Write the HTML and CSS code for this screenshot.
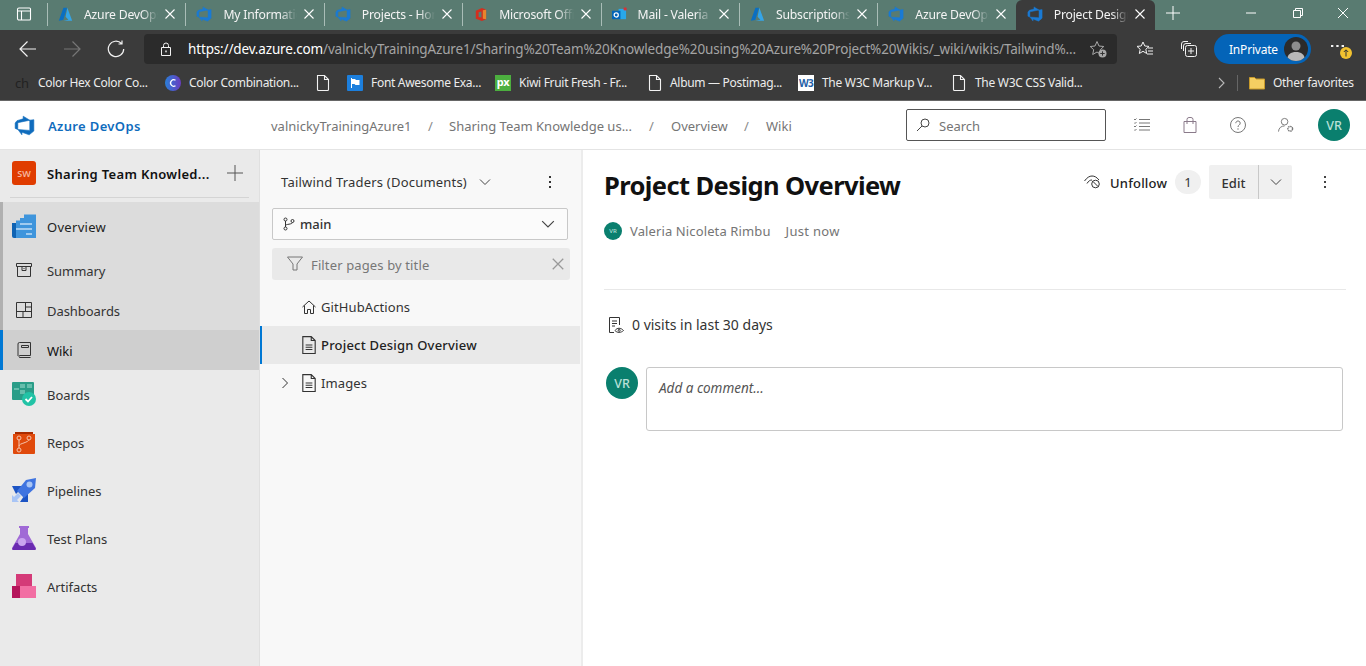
FILE: index.html
```html
<!DOCTYPE html>
<html lang="en">
<head>
<meta charset="utf-8">
<title>Project Design Overview</title>
<link rel="stylesheet" href="styles.css">
</head>
<body>
<svg class="defs" width="0" height="0" aria-hidden="true">
  <defs>
    <symbol id="devops" viewBox="0 0 18 18"><path fill="currentColor" stroke="currentColor" stroke-width=".5" d="M17 4v9.740l-4 3.280-6.200-2.260V17l-3.510-4.590 10.230.8V4.440zm-3.410.49L7.850 1v2.290L2.580 4.840 1 6.870v4.610l2.260 1V6.570z"/></symbol>
    <symbol id="azure" viewBox="0 0 18 18"><path fill="#0a6fc2" d="M6.500 1h4.400L6.300 15.500 1 16.500z"/><path fill="#35a5e8" d="M11.200 1 17 16.500H6.500l6-1.200-3.400-3.600z"/></symbol>
    <symbol id="close" viewBox="0 0 12 12"><path fill="none" stroke="currentColor" stroke-width="1.100" d="M1.500 1.500l9 9M10.500 1.500l-9 9"/></symbol>
    <symbol id="chev" viewBox="0 0 12 12"><path fill="none" stroke="currentColor" stroke-width="1" d="M1 3.500l5 5 5-5"/></symbol>
    <symbol id="file" viewBox="0 0 14 18"><path fill="none" stroke="currentColor" stroke-width="1.100" d="M1.500 1.500h7l4 4v10a1 1 0 0 1-1 1h-9a1 1 0 0 1-1-1zM8.500 1.500v4h4"/></symbol>
    <symbol id="doc" viewBox="0 0 14 16"><path fill="none" stroke="currentColor" stroke-width="1" d="M1.500.5h7.500l3.500 3.500v11.500h-11zM9 .5V4h3.500M4 8h6M4 10h6M4 12h6"/></symbol>
    <symbol id="dots" viewBox="0 0 4 16"><path fill="currentColor" d="M1 2h2v2H1zM1 7h2v2H1zM1 12h2v2H1z"/></symbol>
  </defs>
</svg>

<div class="tabstrip">
  <svg class="tabs-btn" viewBox="0 0 16 16"><path fill="none" stroke="#fff" stroke-width="1.100" d="M3 2h10.500a1 1 0 0 1 1 1v10a1 1 0 0 1-1 1H3a1.500 1.500 0 0 1-1.500-1.500v-9A1.500 1.500 0 0 1 3 2zM1.500 5h13M5.500 5v9"/></svg>
  <div class="tab"><svg class="favi"><use href="#azure"/></svg><span class="tab-title">Azure DevOps</span><svg class="tab-x"><use href="#close"/></svg></div>
  <div class="tab"><svg class="favi blue"><use href="#devops"/></svg><span class="tab-title">My Information</span><svg class="tab-x"><use href="#close"/></svg></div>
  <div class="tab"><svg class="favi blue"><use href="#devops"/></svg><span class="tab-title">Projects - Home</span><svg class="tab-x"><use href="#close"/></svg></div>
  <div class="tab"><svg class="favi" viewBox="0 0 16 16"><path fill="#d32f1e" d="M9.500 1 14 3v10l-4.500 2L3 12.500V4z"/><path fill="#e8852c" d="M10.500 3.500 14 3v10l-3.500-.5z"/><path fill="#5a7c72" d="M6 5.500l3-.8v6.500l-3-.6z"/></svg><span class="tab-title">Microsoft Office</span><svg class="tab-x"><use href="#close"/></svg></div>
  <div class="tab"><svg class="favi" viewBox="0 0 16 16"><path fill="#28a8ea" d="M7 2h8v11H7z"/><path fill="#0364b8" d="M0 4h9v9H0z"/><circle cx="4.500" cy="8.500" r="2.200" fill="none" stroke="#fff" stroke-width="1.300"/><circle cx="14" cy="2" r="1.800" fill="#d13438"/></svg><span class="tab-title">Mail - Valeria</span><svg class="tab-x"><use href="#close"/></svg></div>
  <div class="tab"><svg class="favi"><use href="#azure"/></svg><span class="tab-title">Subscriptions</span><svg class="tab-x"><use href="#close"/></svg></div>
  <div class="tab"><svg class="favi blue"><use href="#devops"/></svg><span class="tab-title">Azure DevOps</span><svg class="tab-x"><use href="#close"/></svg></div>
  <div class="tab active"><svg class="favi blue"><use href="#devops"/></svg><span class="tab-title">Project Design</span><svg class="tab-x"><use href="#close"/></svg></div>
  <svg class="new-tab" viewBox="0 0 14 14"><path fill="none" stroke="#fff" stroke-width="1" d="M7 0v14M0 7h14"/></svg>
  <div class="win-btns">
    <svg viewBox="0 0 10 10"><path stroke="#fff" d="M0 5h10"/></svg>
    <svg viewBox="0 0 10 10"><path fill="none" stroke="#fff" d="M.5 2.500h7v7h-7zM2.500 2.500v-2h7v7h-2"/></svg>
    <svg viewBox="0 0 10 10"><path stroke="#fff" d="M0 0l10 10M10 0L0 10"/></svg>
  </div>
</div>

<div class="toolbar">
  <svg class="nav" viewBox="0 0 18 18"><path fill="none" stroke="#f2f2f2" stroke-width="1.200" d="M17 9H1M8.500 1.500 1 9l7.500 7.500"/></svg>
  <svg class="nav dim" viewBox="0 0 18 18"><path fill="none" stroke="#777" stroke-width="1.200" d="M1 9h16M9.500 1.500 17 9l-7.500 7.500"/></svg>
  <svg class="nav" viewBox="0 0 18 18"><path fill="none" stroke="#f2f2f2" stroke-width="1.200" d="M14.500 3.500A7.700 7.700 0 1 0 16.700 9M15 .5v3.500h-3.500"/></svg>
  <div class="address">
    <svg class="lock" viewBox="0 0 12 14"><path fill="none" stroke="#f2f2f2" d="M1.500 5.500h9v8h-9zM3.500 5.500V3.500a2.500 2.500 0 0 1 5 0v2"/><rect x="5.300" y="8.500" width="1.400" height="1.800" fill="#f2f2f2"/></svg>
    <span class="url"><b>https://dev.azure.com</b>/valnickyTrainingAzure1/Sharing%20Team%20Knowledge%20using%20Azure%20Project%20Wikis/_wiki/wikis/Tailwind%...</span>
    <svg class="star-add" viewBox="0 0 18 18"><path fill="none" stroke="#a8a8a8" d="M8 1.500l2 4.500 4.800.5-3.500 3.200 1 4.800L8 12l-4.300 2.500 1-4.800L1.200 6.500 6 6z"/><circle cx="13.500" cy="13.500" r="4" fill="#a8a8a8"/><path stroke="#333" d="M13.500 11.300v4.400M11.300 13.500h4.400"/></svg>
  </div>
  <svg class="tool fav" viewBox="0 0 18 18"><path fill="none" stroke="#f2f2f2" d="M7 2l1.800 4 4.200.4-3.200 2.900.9 4.200L7 11.300l-3.700 2.200.9-4.200L1 6.400 5.200 6zM12 8h5M12 11h5M11 14h6"/></svg>
  <svg class="tool coll" viewBox="0 0 18 18"><path fill="none" stroke="#f2f2f2" d="M8 1.500H4A2.500 2.500 0 0 0 1.500 4v5M3.500 11V6A2.500 2.500 0 0 1 6 3.500h5M7.500 5.500h7a2 2 0 0 1 2 2v7a2 2 0 0 1-2 2h-7a2 2 0 0 1-2-2v-7a2 2 0 0 1 2-2zM11 8v6M8 11h6"/></svg>
  <div class="inprivate"><span>InPrivate</span><div class="pic"><svg viewBox="0 0 24 24"><circle cx="12" cy="9" r="4.500" fill="#8d8d8d"/><path fill="#b8b8b8" d="M3 24c0-7 4-9 9-9s9 2 9 9z"/></svg></div></div>
  <div class="more"><svg class="more-dots" viewBox="0 0 14 4"><path fill="#f2f2f2" d="M0 1h2.500v2H0zM5.700 1h2.500v2H5.700zM11.400 1H14v2h-2.600z"/></svg><svg class="badge-up" viewBox="0 0 12 12"><circle cx="6" cy="6" r="6" fill="#f2c230"/><path stroke="#333" fill="none" d="M6 9.500v-6.500M3.800 5 6 2.800 8.200 5"/></svg></div>
</div>

<div class="bookmarks">
  <div class="bm"><span class="ch">ch</span><span>Color Hex Color Co...</span></div>
  <div class="bm"><svg class="bi" viewBox="0 0 16 16"><defs><linearGradient id="cc" x1="0" x2="1"><stop offset="0" stop-color="#2a7fd8"/><stop offset="1" stop-color="#6a3cc0"/></linearGradient></defs><circle cx="8" cy="8" r="8" fill="url(#cc)"/><path fill="none" stroke="#fff" stroke-width="1.300" d="M10.500 5.300a3.200 3.200 0 1 0 0 5.400"/></svg><span>Color Combination...</span></div>
  <div class="bm"><svg class="bi file"><use href="#file"/></svg></div>
  <div class="bm"><svg class="bi" viewBox="0 0 16 16"><rect width="16" height="16" rx="1" fill="#1c7fdd"/><path fill="#fff" d="M4 3h1v10H4zM5 4h3l1 1h3.500v5H8.500l-1-1H5z"/></svg><span>Font Awesome Exa...</span></div>
  <div class="bm"><span class="px">px</span><span>Kiwi Fruit Fresh - Fr...</span></div>
  <div class="bm"><svg class="bi file"><use href="#file"/></svg><span>Album — Postimag...</span></div>
  <div class="bm"><span class="w3">W3</span><span>The W3C Markup V...</span></div>
  <div class="bm"><svg class="bi file"><use href="#file"/></svg><span>The W3C CSS Valid...</span></div>
  <svg class="bm-more" viewBox="0 0 8 12"><path fill="none" stroke="#b8b8b8" stroke-width="1.100" d="M1 1l5 5-5 5"/></svg>
  <div class="bm-sep"></div>
  <div class="bm-other"><svg class="bi" viewBox="0 0 16 14"><path fill="#f5cf62" stroke="#c89a2a" d="M.500 1.500h5l1.500 1.500h8.500v10H.500z"/></svg><span>Other favorites</span></div>
</div>

<header class="ado-head">
  <div class="brand"><svg class="brand-logo"><use href="#devops"/></svg><span>Azure DevOps</span></div>
  <nav class="crumbs">
    <span class="c1">valnickyTrainingAzure1</span><span class="sl">/</span>
    <span class="c2">Sharing Team Knowledge us...</span><span class="sl">/</span>
    <span class="c3">Overview</span><span class="sl">/</span>
    <span class="c4">Wiki</span>
  </nav>
  <div class="search"><svg viewBox="0 0 14 14"><circle cx="9" cy="5" r="4" fill="none" stroke="#444"/><path stroke="#444" d="M6 8l-5 5"/></svg><span>Search</span></div>
  <div class="head-icons">
    <svg viewBox="0 0 16 14"><path fill="none" stroke="#777" d="M5 1.500h11M5 5h11M5 8.500h11M5 12h11M0 1l1 1 1.500-1.500M0 4.500l1 1 1.500-1.500M0 8l1 1 1.500-1.500M0 11.500l1 1 1.500-1.500"/></svg>
    <svg viewBox="0 0 14 16"><path fill="none" stroke="#8a7a8a" d="M1 4.500h12V15.500H1zM4 7V2.500a2 2 0 0 1 2-2h2a2 2 0 0 1 2 2V7"/></svg>
    <svg viewBox="0 0 16 16"><circle cx="8" cy="8" r="7.500" fill="none" stroke="#777"/><path fill="none" stroke="#777" d="M5.800 6.200a2.200 2.200 0 1 1 3.400 1.800c-.8.500-1.200 1-1.200 2"/><circle cx="8" cy="12" r=".7" fill="#777"/></svg>
    <svg viewBox="0 0 17 16"><circle cx="7" cy="4.500" r="3.500" fill="none" stroke="#777"/><path fill="none" stroke="#777" d="M.500 15c.3-4 3-6 6.500-6"/><circle cx="13" cy="12" r="2.500" fill="none" stroke="#777" stroke-dasharray="1.500 .6" stroke-width="1.500"/></svg>
  </div>
  <div class="avatar big head-av">VR</div>
</header>

<div class="body">
  <aside class="side">
    <div class="proj"><span class="sw">SW</span><span class="proj-name">Sharing Team Knowled...</span><svg class="plus" viewBox="0 0 16 16"><path stroke="#555" d="M8 0v16M0 8h16"/></svg></div>
    <div class="group">
      <div class="row tall"><svg class="si" viewBox="0 0 24 24"><path fill="#0f63b3" d="M0 9h4v15H2a2 2 0 0 1-2-2z"/><path fill="#3f95dc" d="M4 6.500h4V4h4V.5h12V24H4z"/><path fill="#cbe3f7" d="M8 9h12v2H8zM4 14h16v2H4zM14 19h6v2h-6z" opacity=".7"/></svg><span class="lead">Overview</span></div>
      <div class="row"><svg class="si sm" viewBox="0 0 16 14"><path fill="none" stroke="#333" d="M.500.500h15v3h-15zM1.500 3.500v10h13v-10M6 3.500v4h4v-4M7.500 5.500h1"/></svg><span>Summary</span></div>
      <div class="row"><svg class="si sm" viewBox="0 0 16 16"><path fill="none" stroke="#333" d="M.500.500h15v15H.500zM.500 9.500h15M9.500.500v9M9.500 5h6M7 9.500v6"/></svg><span>Dashboards</span></div>
      <div class="row on"><svg class="si sm" viewBox="0 0 14 16"><path fill="none" stroke="#333" d="M2.500.500h11v13h-11a1.500 1.500 0 0 0 0 2h11M1 14V2A1.500 1.500 0 0 1 2.500.500M4.500 3.500h7v2h-7z"/></svg><span>Wiki</span></div>
    </div>
    <div class="row big"><svg class="si" viewBox="0 0 24 24"><rect width="22" height="18" y="0" rx="1" fill="#2a9d88"/><path fill="#8fd4c4" d="M2 6h5v2H2zM8 2h5v4H8zM15 2h5v4h-5zM8 8h5v4H8z" opacity=".6"/><circle cx="17" cy="17" r="7" fill="#22c3a6"/><path fill="none" stroke="#fff" stroke-width="1.800" d="M13.500 17l2.500 2.500 4-4.500"/></svg><span>Boards</span></div>
    <div class="row big"><svg class="si" viewBox="0 0 24 24"><path fill="#a92c00" d="M3 2h18v3H3z"/><path fill="#e04a0c" d="M1 4h22v19a1 1 0 0 1-1 1H2a1 1 0 0 1-1-1z"/><path fill="none" stroke="#f5c4ad" d="M7 9v9M17 9c0 4-10 4-10 7"/><circle cx="7" cy="8" r="2" fill="#e04a0c" stroke="#f5c4ad"/><circle cx="17" cy="8" r="2" fill="#e04a0c" stroke="#f5c4ad"/><circle cx="7" cy="20" r="2" fill="#e04a0c" stroke="#f5c4ad"/></svg><span>Repos</span></div>
    <div class="row big"><svg class="si" viewBox="0 0 24 24"><path fill="#1c54c4" d="M0 8 10 8 8 12 4 16z"/><path fill="#1c54c4" d="M16 14v10H8l4-6z"/><path fill="#3f74e0" d="M14 2 24 0l-1 10L12 20 5 13z"/><circle cx="17.500" cy="6.500" r="3" fill="#a9c5f5"/><path fill="#a9c5f5" d="M0 17l2 2 4-4 3 3-4 4 2 2H0z"/></svg><span>Pipelines</span></div>
    <div class="row big"><svg class="si" viewBox="0 0 24 24"><path fill="#a06ad6" d="M7 0h10v2h-1v6l8 14a2 2 0 0 1-2 2H2a2 2 0 0 1-2-2L8 8V2H7z"/><path fill="#6a2bb0" d="M3.500 17h17l3.500 6a1.500 1.500 0 0 1-1.500 1h-21A1.500 1.500 0 0 1 0 23z"/><circle cx="10" cy="16" r="4" fill="#c9a4ef"/></svg><span>Test Plans</span></div>
    <div class="row big"><svg class="si" viewBox="0 0 24 24"><path fill="#d43a78" d="M4 0h16v12H4z"/><path fill="#b5155b" d="M0 12h10v12H0z"/><path fill="#f26ea3" d="M8 12h16v12H8z"/></svg><span>Artifacts</span></div>
  </aside>

  <section class="tree">
    <div class="wiki-title"><span>Tailwind Traders (Documents)</span><svg class="ic12"><use href="#chev"/></svg><svg class="tree-dots"><use href="#dots"/></svg></div>
    <div class="branch"><svg class="ic14" viewBox="0 0 14 14"><g fill="none" stroke="#333"><circle cx="3.500" cy="2.500" r="1.500"/><circle cx="3.500" cy="11.500" r="1.500"/><circle cx="10.500" cy="4" r="1.500"/><path d="M3.500 4v6M10.500 5.500c0 2-7 1.500-7 3"/></g></svg><span>main</span><svg class="ic14 push"><use href="#chev"/></svg></div>
    <div class="filter"><svg class="ic16" viewBox="0 0 16 16"><path fill="none" stroke="#777" d="M.500 1h15L10 8v6H6V8z"/></svg><span class="filter-text">Filter pages by title</span><svg class="ic14 push grey"><use href="#close"/></svg></div>
    <div class="page"><svg class="pi" viewBox="0 0 14 14"><path fill="none" stroke="#333" d="M.500 7 7 1l6.500 6M2.500 5.500v8h3v-4h3v4h3v-8"/></svg><span>GitHubActions</span></div>
    <div class="page sel"><svg class="pi doc"><use href="#doc"/></svg><span>Project Design Overview</span></div>
    <div class="page"><svg class="twist" viewBox="0 0 8 12"><path fill="none" stroke="#333" d="M1.500 1l5 5-5 5"/></svg><svg class="pi doc"><use href="#doc"/></svg><span>Images</span></div>
  </section>

  <main class="content">
    <div class="title-row">
      <h1>Project Design Overview</h1>
      <div class="actions">
        <svg class="unf-ic" viewBox="0 0 17 14"><g fill="none" stroke="#333"><path d="M.500 6C3 2.500 5.500 1 8 1s4.500 1 7 4M3 8.500C4.500 6 6 5 8 5"/><circle cx="11.500" cy="9" r="3.800"/><path d="M9 6.500l5 5"/></g></svg>
        <span class="unf">Unfollow</span>
        <span class="count">1</span>
        <div class="edit"><span class="edit-l">Edit</span><span class="edit-r"><svg class="ic12"><use href="#chev"/></svg></span></div>
        <svg class="act-dots"><use href="#dots"/></svg>
      </div>
    </div>
    <div class="author"><div class="avatar small">VR</div><span class="a-name">Valeria Nicoleta Rimbu</span><span class="a-when">Just now</span></div>
    <div class="visits"><svg viewBox="0 0 16 16"><g fill="none" stroke="#333"><path d="M6 15.500H1.500V.500h10V8M4 4h5M4 6.500h5M4 9h3"/><path d="M7 13.500c2-3 6-3 8.500 0-2.500 2.500-6.500 2.500-8.500 0z"/><circle cx="11.200" cy="13.300" r="1"/></g></svg><span>0 visits in last 30 days</span></div>
    <div class="comment"><div class="avatar big">VR</div><div class="box">Add a comment...</div></div>
  </main>
</div>
</body>
</html>
```
FILE: styles.css
```css
* { box-sizing: border-box; }
html, body { margin: 0; height: 100%; overflow: hidden; }
body {
  font-family: "Noto Sans", "Open Sans", sans-serif;
  font-size: 13px;
  color: #333;
  display: flex;
  flex-direction: column;
  background: #fff;
}
.defs { position: absolute; }

/* tab strip */
.tabstrip { height: 30px; background: #597b71; display: flex; align-items: stretch; color: #fff; flex: none; }
.tabs-btn { width: 16px; height: 16px; margin: 6px 15px 0 16px; flex: none; }
.tab { width: 138.400px; flex: none; display: flex; align-items: center; padding: 0 9px 2px 10px; border-left: 1px solid #a9bdb7; position: relative; border-image: linear-gradient(#597b71 4px, #a9bdb7 4px, #a9bdb7 25px, #597b71 25px) 1; }
.tab.active { width: 139px; background: #3b3b3b; border: 0; border-radius: 6px 6px 0 0; padding-left: 11px; }
.favi { width: 15px; height: 15px; flex: none; margin-right: 11px; }
.favi.blue { color: #1a7ad4; width: 16px; height: 16px; }
.tab-title { flex: 1; overflow: hidden; white-space: nowrap; font-size: 12.200px; letter-spacing: -0.2px; color: #f4f4f4; -webkit-mask-image: linear-gradient(90deg, #000 78%, transparent 100%); mask-image: linear-gradient(90deg, #000 78%, transparent 100%); }
.tab-x { width: 12px; height: 12px; flex: none; margin-left: 6px; color: #fff; }
.new-tab { width: 14px; height: 14px; margin: 6px 0 0 11px; flex: none; }
.win-btns { margin-left: auto; display: flex; align-items: flex-start; }
.win-btns svg { width: 10px; height: 10px; margin-top: 8px; flex: none; }
.win-btns svg:nth-child(2) { margin-left: 37px; }
.win-btns svg:nth-child(3) { margin-left: 35px; margin-right: 18px; }

/* toolbar */
.toolbar { height: 35px; background: #3b3b3b; display: flex; align-items: flex-start; flex: none; }
.nav { width: 18px; height: 18px; margin: 10px 0 0 19px; flex: none; }
.nav.dim, .nav + .nav + .nav { margin-left: 26px; }
.address { width: 973px; height: 30px; margin: 4px 0 0 19px; border-radius: 4px; background: #2b2b2b; display: flex; align-items: center; padding-left: 16px; flex: none; }
.lock { width: 12px; height: 14px; flex: none; }
.url { margin-left: 16px; width: 893px; font-size: 13.500px; white-space: nowrap; overflow: hidden; color: #a4a4a4; letter-spacing: -0.150px; }
.url b { color: #fff; font-weight: 400; }
.star-add { width: 18px; height: 18px; margin-left: 8px; flex: none; }
.tool { width: 18px; height: 18px; margin-top: 10px; flex: none; }
.fav { margin-left: 19px; }
.coll { margin-left: 26px; }
.inprivate { width: 97px; height: 30px; margin: 4px 0 0 16px; border-radius: 15px; background: #0464b8; color: #fff; display: flex; align-items: center; justify-content: space-between; padding: 0 3px 0 15px; font-size: 12px; letter-spacing: -0.2px; flex: none; }
.pic { width: 24px; height: 24px; border-radius: 50%; overflow: hidden; background: #2b2b2b; }
.pic svg { width: 24px; height: 24px; display: block; }
.more { position: relative; margin: 14px 0 0 20px; flex: none; }
.more-dots { width: 13px; height: 4px; display: block; }
.badge-up { width: 12px; height: 12px; position: absolute; left: 9px; top: 3px; }

/* bookmarks */
.bookmarks { height: 35px; background: #3b3b3b; display: flex; align-items: center; padding-left: 15px; color: #ececec; font-size: 12px; letter-spacing: -0.3px; flex: none; }
.bm { display: flex; align-items: center; flex: none; white-space: nowrap; }
.bm:nth-child(1) { width: 150px; }
.bm:nth-child(2) { width: 151px; }
.bm:nth-child(3) { width: 31px; }
.bm:nth-child(4) { width: 148px; }
.bm:nth-child(5) { width: 153px; }
.bm:nth-child(6) { width: 150px; }
.bm:nth-child(7) { width: 154px; }
.bm:nth-child(8) { width: 266px; }
.bi { width: 16px; height: 16px; margin-right: 8px; flex: none; }
.bi.file { width: 14px; height: 18px; margin-right: 8px; color: #f2f2f2; }
.bm:nth-child(8) .bi.file { margin-right: 9px; }
.ch { width: 23px; color: #222; font-size: 13px; flex: none; }
.px { width: 16px; height: 16px; margin-right: 8px; background: #4caf3f; color: #fff; font-size: 11px; line-height: 14px; text-align: center; flex: none; font-weight: 700; }
.w3 { width: 16px; height: 16px; margin-right: 8px; background: #fff; color: #1f5fa8; font-size: 10px; line-height: 16px; text-align: center; font-weight: 700; flex: none; letter-spacing: -.6px; }
.bm-more { width: 8px; height: 12px; flex: none; }
.bm-sep { width: 1px; height: 16px; background: #666; margin: 0 11px; flex: none; }
.bm-other { display: flex; align-items: center; flex: none; }

/* ado header */
.ado-head { height: 50px; flex: none; background: #fff; border-top: 1px solid #666; border-bottom: 1px solid #e4e4e4; display: flex; align-items: center; padding-left: 14px; }
.brand { display: flex; align-items: center; color: #0f6cbd; font-weight: 600; width: 257px; flex: none; letter-spacing: .35px; }
.brand span, .crumbs span, .search span { padding-top: 2px; }
.brand-logo { width: 21px; height: 21px; color: #0f6cbd; margin-right: 13px; flex: none; }
.crumbs { display: flex; width: 635px; flex: none; color: #757575; align-items: center; }
.crumbs span { white-space: nowrap; flex: none; }
.c1 { width: 157px; }
.c2 { width: 200px; }
.c3 { width: 73px; }
.sl { width: 22px; color: #8a8a8a; }
.crumbs .sl:nth-child(2) { width: 21px; }
.search { width: 200px; height: 32px; border: 1px solid #555; border-radius: 2px; display: flex; align-items: center; padding-left: 9px; color: #757575; flex: none; }
.search svg { width: 14px; height: 14px; margin-right: 9px; }
.head-icons { display: flex; margin-left: 28px; align-items: center; flex: none; }
.head-icons svg { width: 16px; height: 16px; margin-right: 32px; flex: none; }
.head-av { margin-left: -8px; }
.avatar { border-radius: 50%; background: #0a7f6e; color: #b9e0d8; display: flex; align-items: center; justify-content: center; flex: none; font-weight: 500; }
.avatar.big { width: 32px; height: 32px; font-size: 12.500px; }
.avatar.small { width: 18px; height: 18px; font-size: 6px; }

/* layout */
.body { flex: 1; display: flex; min-height: 0; }
.side { width: 260px; flex: none; background: #eaeaea; border-right: 1px solid #e0e0e0; color: #333; letter-spacing: -0.05px; }
.proj { height: 52px; margin: 0 10px; padding-top: 11px; display: flex; align-items: flex-start; position: relative; }
.proj::after { content: ""; position: absolute; left: 0; right: 0; bottom: 4px; height: 1px; background: #d4d4d4; }
.sw { width: 24px; height: 24px; margin-left: 2px; border-radius: 3px; background: #e03c00; color: #f6b49c; font-size: 9px; font-weight: 600; display: flex; align-items: center; justify-content: center; flex: none; }
.proj-name { margin-left: 11px; padding-top: 1px; line-height: 25px; font-weight: 600; color: #111; white-space: nowrap; width: 172px; flex: none; letter-spacing: .32px; }
.plus { width: 16px; height: 16px; margin: 4px 0 0 8px; flex: none; }
.group { background: #dcdcdc; border-left: 3px solid #b0b0b0; }
.row { height: 40px; display: flex; align-items: center; }
.row span { white-space: nowrap; padding-top: 2px; }
.group .row { padding-left: 9px; }
.row.tall { height: 48px; }
.lead { letter-spacing: .3px; color: #222; }
.group .row.on { margin-left: -3px; padding-left: 9px; background: #cfcfcf; border-left: 3px solid #0078d4; color: #111; }
.row.big { height: 48px; padding-left: 12px; }
.si { width: 24px; height: 24px; margin-right: 11px; flex: none; }
.si.sm { width: 16px; height: 16px; margin: 0 15px 0 4px; }

.tree { width: 323px; flex: none; background: #f8f8f8; border-right: 2px solid #ececec; padding: 0 1px 0 0; color: #333; }
.wiki-title { height: 58px; display: flex; align-items: center; padding: 6px 0 0 21px; letter-spacing: .2px; }
.wiki-title span { width: 198px; white-space: nowrap; flex: none; }
.ic12 { width: 12px; height: 12px; flex: none; color: #444; }
.tree-dots { width: 4px; height: 16px; margin-left: 57px; color: #333; flex: none; }
.branch { width: 296px; height: 32px; margin-left: 12px; border: 1px solid #c8c8c8; border-radius: 2px; background: #fbfbfb; display: flex; align-items: center; padding: 0 12px 0 9px; font-weight: 500; }
.ic14 { width: 14px; height: 14px; flex: none; }
.branch .ic14:first-child { margin-right: 4px; }
.push { margin-left: auto; color: #444; }
.grey { color: #999; }
.filter { width: 298px; height: 32px; margin: 8px 0 8px 12px; background: #e9e9e9; border-radius: 3px; display: flex; align-items: center; padding: 0 5px 0 15px; color: #777; letter-spacing: .13px; }
.filter-text { padding-top: 2px; }
.ic16 { width: 16px; height: 16px; margin-right: 8px; flex: none; }
.page { height: 38px; display: flex; align-items: center; padding-left: 42px; letter-spacing: .1px; }
.sel { background: #e9e9e9; border-left: 2px solid #0078d4; padding-left: 40px; width: 320px; font-weight: 500; color: #222; letter-spacing: .2px; }
.page .twist { width: 8px; height: 12px; margin-left: -21px; margin-right: 13px; flex: none; }
.pi { width: 14px; height: 14px; margin-right: 5px; flex: none; }
.pi.doc { width: 16px; height: 18px; margin: 0 4px 0 -1px; color: #333; }

.content { flex: 1; min-width: 0; padding: 15px 20px 0 21px; background: #fff; }
.title-row { display: flex; align-items: flex-start; }
h1 { margin: 0; font-size: 25.500px; font-weight: 700; color: #111; letter-spacing: -0.6px; line-height: 40px; white-space: nowrap; }
.actions { margin-left: auto; display: flex; align-items: center; height: 34px; color: #333; margin-right: 19px; }
.unf-ic { width: 17px; height: 14px; margin-right: 9px; flex: none; }
.unf { font-weight: 500; width: 65px; white-space: nowrap; color: #222; letter-spacing: .2px; padding-top: 2px; }
.count { width: 26px; height: 24px; border-radius: 12px; background: #f0f0f0; display: flex; align-items: center; justify-content: center; }
.edit { margin-left: 8px; width: 83px; height: 34px; background: #f0f0f0; border-radius: 2px; display: flex; align-items: center; font-weight: 500; }
.edit-l { width: 50px; text-align: center; line-height: 36px; height: 34px; border-right: 1px solid #c8c8c8; }
.edit-r { flex: 1; display: flex; justify-content: center; }
.act-dots { width: 4px; height: 16px; margin-left: 31px; color: #444; flex: none; }
.author { display: flex; align-items: center; height: 18px; margin-top: 17px; color: #757575; letter-spacing: .12px; }
.a-name { margin: 0 15px 0 8px; }
.a-when { letter-spacing: .3px; }
.visits { margin-top: 49px; border-top: 1px solid #e8e8e8; padding-top: 8px; display: flex; align-items: center; height: 62px; font-size: 14px; }
.visits svg { width: 16px; height: 16px; margin: 0 8px 0 4px; flex: none; }
.comment { display: flex; margin-top: 16px; padding-left: 2px; align-items: flex-start; gap: 8px; }
.box { width: 697px; height: 64px; border: 1px solid #c8c8c8; border-radius: 3px; padding: 11px 12px; font-style: italic; font-size: 13.500px; color: #555; }
```
